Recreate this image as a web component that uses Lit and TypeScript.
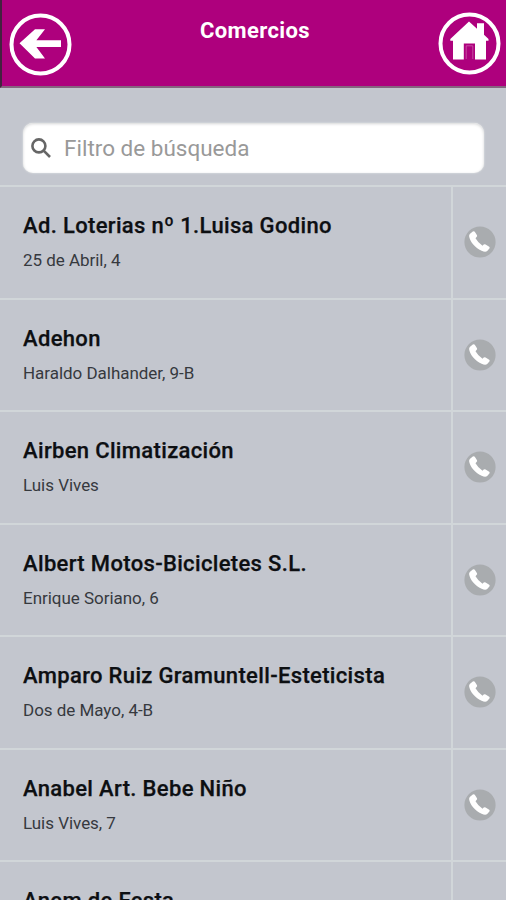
import { LitElement, html, css, svg } from "lit";
import { customElement, property } from "lit/decorators.js";

interface Shop {
  name: string;
  address: string;
}

const SHOPS: Shop[] = [
  { name: "Ad. Loterias nº 1.Luisa Godino", address: "25 de Abril, 4" },
  { name: "Adehon", address: "Haraldo Dalhander, 9-B" },
  { name: "Airben Climatización", address: "Luis Vives" },
  { name: "Albert Motos-Bicicletes S.L.", address: "Enrique Soriano, 6" },
  { name: "Amparo Ruiz Gramuntell-Esteticista", address: "Dos de Mayo, 4-B" },
  { name: "Anabel Art. Bebe Niño", address: "Luis Vives, 7" },
  { name: "Anem de Festa", address: "" },
];

const arrow = svg`<path d="M10.5 30.3 L26 16.2 H36 L27.4 27.2 H52 V34 H27.4 L36 45.4 H26 Z"/>`;
const house = svg`<path fill-rule="evenodd" d="M31 9.5 L39 16.8 V11.3 H46 V22.8 L50.5 27 V28.8 H48 V47.4 H15 V28.8 H12.3 V27 Z M25.8 31.6 V47.4 H37 V31.6 Z"/><path d="M28.2 47 V33.8 H34.8 V47" fill="none" stroke="#d06ab2" stroke-width="0.7"/>`;

@customElement("shop-row")
export class ShopRow extends LitElement {
  @property({ attribute: false }) shop!: Shop;

  static styles = css`
    :host {
      display: flex;
      box-sizing: border-box;
      height: 112.5px;
      border-top: 2px solid #d1d6d9;
    }
    .info {
      flex: 1;
      min-width: 0;
      padding: 24.3px 0 0 23px;
      white-space: nowrap;
    }
    .name {
      font-size: 22px;
      font-weight: 500;
      line-height: 30px;
      letter-spacing: 0.34px;
      color: #0d0f12;
      -webkit-text-stroke: 0.25px #0d0f12;
    }
    .address {
      margin-top: 7px;
      font-size: 17px;
      line-height: 24px;
      letter-spacing: -0.03px;
      color: #36393e;
    }
    .call {
      width: 53px;
      border-left: 2px solid #d1d6d9;
      display: flex;
      align-items: center;
      justify-content: center;
    }
    .phone {
      width: 32px;
      height: 32px;
      margin-left: 1px;
    }
  `;

  render() {
    return html`
      <div class="info">
        <div class="name">${this.shop.name}</div>
        <div class="address">${this.shop.address}</div>
      </div>
      <div class="call">
        <svg class="phone" viewBox="0 0 32 32">
          <circle cx="16" cy="16" r="15.6" fill="#a9acaf" />
          <path
            d="M5.8 8 L8.8 5.6 Q10.2 4.9 11.1 6.2 L13 9.2 Q13.5 10.3 12.5 11.1 L11.5 12.2 Q13.8 16.4 18.5 19.7 L19.7 18.6 Q20.5 17.8 21.6 18.4 L25.2 20.7 Q26.2 21.5 25.4 22.6 L23.2 25 Q21.4 26.4 17.6 24.8 C10.8 21.4 6.4 16.2 5.2 10.8 Q4.9 9 5.8 8 Z"
            fill="#fff"
          />
        </svg>
      </div>
    `;
  }
}

@customElement("app-root")
export class AppRoot extends LitElement {
  static styles = css`
    :host {
      display: block;
      height: 900px;
      overflow: hidden;
      background: #c3c6ce;
      font-family: Roboto, "Liberation Sans", sans-serif;
    }
    .header {
      box-sizing: border-box;
      height: 88px;
      display: flex;
      justify-content: space-between;
      background: #ae007d;
      border-left: 2px solid #44213f;
      border-bottom: 2px solid #85647f;
      padding: 0 5px 0 7px;
    }
    .round {
      width: 63px;
      height: 63px;
      fill: #fff;
    }
    .back {
      margin-top: 13px;
    }
    .home {
      margin-top: 12px;
    }
    .ring {
      fill: none;
      stroke: #fff;
      stroke-width: 4;
    }
    .title {
      margin: 17px 0 0;
      font-size: 22px;
      line-height: 28px;
      font-weight: 700;
      letter-spacing: 0.35px;
      color: #fff;
    }
    .filter {
      box-sizing: border-box;
      height: 97px;
      padding: 35px 22px 0 23px;
    }
    .field {
      box-sizing: border-box;
      height: 50px;
      display: flex;
      align-items: center;
      padding-left: 7px;
      border-radius: 10px;
      background: #fff;
      box-shadow: 0 0 2px #eceeee, inset 0 1px 3px #d4d5d6;
    }
    .lens {
      width: 22px;
      height: 22px;
      fill: none;
      stroke: #666;
      stroke-width: 2.6;
    }
    .hint {
      margin-left: 12px;
      font-size: 22.5px;
      color: #999;
    }
  `;

  render() {
    return html`
      <div class="header">
        <svg class="round back" viewBox="0 0 63 63">
          <circle class="ring" cx="31.5" cy="31.5" r="29" />${arrow}
        </svg>
        <h1 class="title">Comercios</h1>
        <svg class="round home" viewBox="0 0 63 63">
          <circle class="ring" cx="31.5" cy="31.5" r="29" />${house}
        </svg>
      </div>
      <div class="filter">
        <div class="field">
          <svg class="lens" viewBox="0 0 22 22">
            <circle cx="8.9" cy="8.9" r="6.5" />
            <path d="M13.4 13.4 L20 20" />
          </svg>
          <span class="hint">Filtro de búsqueda</span>
        </div>
      </div>
      ${SHOPS.map((shop) => html`<shop-row .shop=${shop}></shop-row>`)}
    `;
  }
}
